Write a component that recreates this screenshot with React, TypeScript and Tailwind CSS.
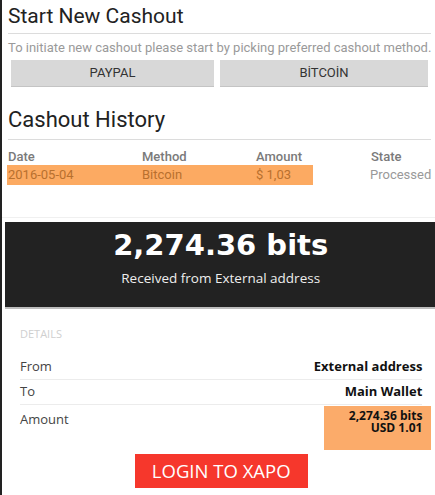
const ROBOTO = "font-['Roboto',sans-serif]";
const OPEN = "font-['Open_Sans',sans-serif]";

export default function App() {
  return (
    <div className="flex h-[495px] w-[435px] overflow-hidden bg-white">
      <div className="w-[2px] shrink-0 bg-[#222]" />
      <div className="flex-1">
        <section className={`${ROBOTO} pl-[6px] pr-[5px]`}>
          <h1 className="pt-[3px] text-[21px] leading-[26px] text-[#222]">Start New Cashout</h1>
          <div className="mt-[4px] h-px bg-[#dcdcdc]" />
          <p className="mt-[6px] whitespace-nowrap text-[13px] leading-[15px] text-[#9a9a9a]">
            To initiate new cashout please start by picking preferred cashout method.
          </p>
          <div className="mt-[5px] flex gap-[6px] pl-[3px]">
            <button className="h-[26px] w-[203px] bg-[#d8d8d8] text-[13px] text-[#333] shadow-[0_1px_0_#c4c4c4]">PAYPAL</button>
            <button className="h-[26px] w-[208px] bg-[#d8d8d8] text-[13px] text-[#333] shadow-[0_1px_0_#c4c4c4]">BİTCOİN</button>
          </div>

          <h2 className="mt-[21px] text-[22px] leading-[26px] text-[#222]">Cashout History</h2>
          <div className="mt-[6px] h-px bg-[#dcdcdc]" />
          <div className="mt-[9px] flex text-[13px] font-medium leading-[16px] text-[#7a7a7a]">
            <span className="w-[134px]">Date</span>
            <span className="w-[114px]">Method</span>
            <span className="w-[115px]">Amount</span>
            <span>State</span>
          </div>
          <div className="flex text-[13px] leading-[20px]">
            <div className="-ml-px flex w-[306px] bg-[#fcaa62] pl-px text-[#b8702e]">
              <span className="w-[134px]">2016-05-04</span>
              <span className="w-[114px]">Bitcoin</span>
              <span>$ 1,03</span>
            </div>
            <span className="ml-[57px] text-[#999]">Processed</span>
          </div>
        </section>

        <div className="mt-[32px] h-px bg-[#f0f0f0]" />

        <section className={`${OPEN} ml-[3px] mt-[4px] flex h-[87px] flex-col items-center border-b-2 border-[#bdbdbd] bg-[#222] pt-[5px] text-white`}>
          <div className="font-['DejaVu_Sans',sans-serif] text-[29px] font-bold leading-[37px]">2,274.36 bits</div>
          <div className="mt-[6px] text-[13.5px] leading-[16px] text-[#eee]">Received from External address</div>
        </section>

        <section className={`${OPEN} pl-[18px] pr-[14px] pt-[18px]`}>
          <div className="text-[11px] uppercase leading-[14px] text-[#cfcfcf]">Details</div>
          <div className="mt-[14px] flex h-[25px] items-center justify-between border-b border-[#ececec] text-[13px]">
            <span className="text-[#444]">From</span>
            <span className="font-bold text-[#111]">External address</span>
          </div>
          <div className="flex h-[25px] items-center justify-between border-b border-[#ececec] text-[13px]">
            <span className="text-[#444]">To</span>
            <span className="font-bold text-[#111]">Main Wallet</span>
          </div>
          <div className="flex justify-between text-[13px]">
            <span className="pt-[5px] text-[#444]">Amount</span>
            <p className="-mr-[9px] mt-px h-[44px] w-[107px] bg-[#fbab6a] pr-[9px] pt-[4px] text-right text-[12px] font-bold leading-[12px] text-[#111]">
              2,274.36 bits
              <br />
              USD 1.01
            </p>
          </div>
          <div className="mt-[4px] flex justify-center">
            <button className="h-[34px] w-[173px] bg-[#f6372c] text-[18.5px] text-white">LOGIN TO XAPO</button>
          </div>
        </section>
      </div>
    </div>
  );
}
